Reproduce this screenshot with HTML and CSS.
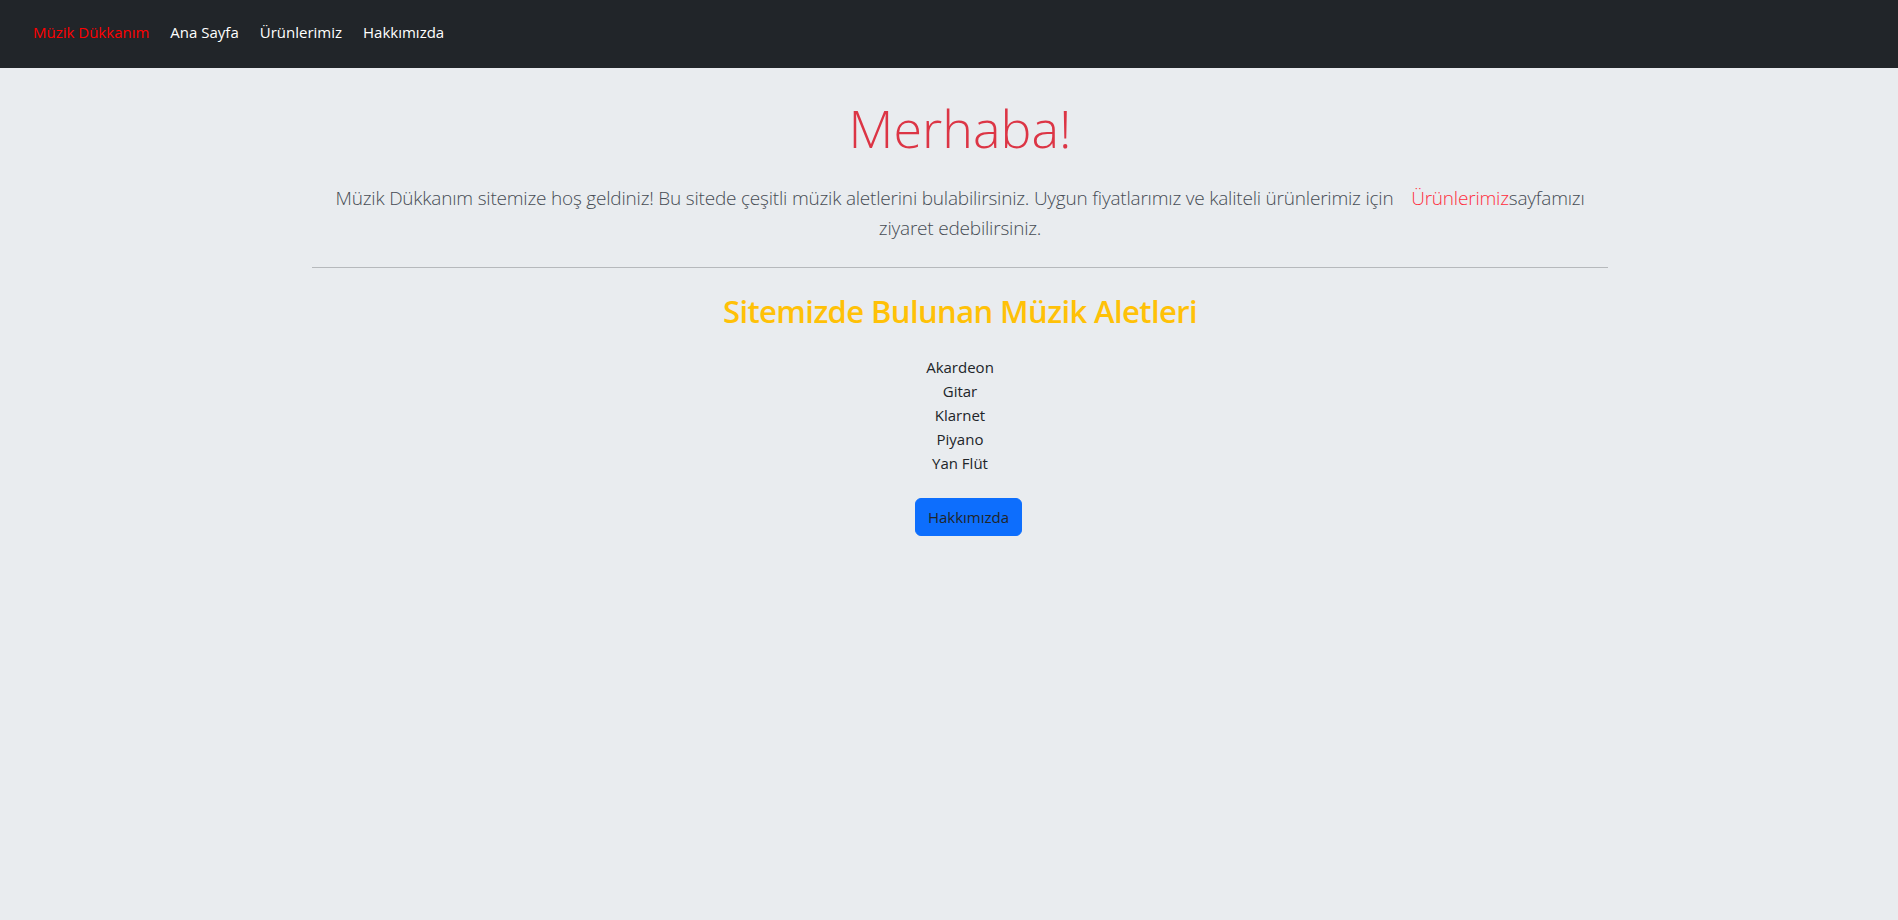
FILE: index.html
```html
<!DOCTYPE html>
<html lang="tr">
<head>
<meta charset="utf-8">
<title>Müzik Dükkanım</title>
<link rel="stylesheet" href="styles.css">
</head>
<body>
<nav class="navbar">
  <a class="brand" href="#">Müzik Dükkanım</a>
  <a class="nav-link" href="#">Ana Sayfa</a>
  <a class="nav-link" href="#">Ürünlerimiz</a>
  <a class="nav-link" href="#">Hakkımızda</a>
</nav>
<main class="page">
  <div class="container">
    <h1 class="display">Merhaba!</h1>
    <p class="lead">Müzik Dükkanım sitemize hoş geldiniz! Bu sitede çeşitli müzik aletlerini bulabilirsiniz. Uygun fiyatlarımız ve kaliteli ürünlerimiz için <a class="lead-link" href="#">Ürünlerimiz</a>sayfamızı ziyaret edebilirsiniz.</p>
    <hr class="divider">
    <h2 class="section-title">Sitemizde Bulunan Müzik Aletleri</h2>
    <ul class="instruments">
      <li>Akardeon</li>
      <li>Gitar</li>
      <li>Klarnet</li>
      <li>Piyano</li>
      <li>Yan Flüt</li>
    </ul>
    <button class="btn-primary" type="button">Hakkımızda</button>
  </div>
</main>
</body>
</html>
```

FILE: styles.css
```css
* { box-sizing: border-box; }
html, body {
  margin: 0;
  padding: 0;
}
body {
  background: #e9ecef;
  font-family: "Open Sans", "Noto Sans", sans-serif;
  font-size: 15px;
  line-height: 1.5;
  color: #212529;
  min-height: 920px;
}
a { text-decoration: none; }

.navbar {
  height: 68px;
  background: #212529;
  display: flex;
  align-items: center;
  gap: 21px;
  padding: 0 0 4px 33px;
}
.brand { color: #ff0000; font-size: 15px; }
.nav-link { color: #ffffff; font-size: 15px; }

.page {
  padding-left: 22px;
}
.container {
  max-width: 1296px;
  margin: 0 auto;
  text-align: center;
}
.display {
  margin: 29px 0 0;
  font-size: 52px;
  font-weight: 300;
  line-height: 1.2;
  color: #dc3545;
}
.lead {
  margin: 24px 0 0;
  padding: 0 12px;
  font-size: 19px;
  font-weight: 300;
  letter-spacing: -0.2px;
  line-height: 30px;
  color: #474d55;
}
.lead-link {
  color: #ff2d3d;
  margin-left: 13px;
}
.divider {
  margin: 24px 0 0;
  border: 0;
  border-top: 1px solid #b6b9bc;
}
.section-title {
  margin: 25px 0 0;
  font-size: 31px;
  font-weight: 600;
  letter-spacing: -0.6px;
  line-height: 1.2;
  color: #ffc107;
}
.instruments {
  list-style: none;
  margin: 24px 0 23px;
  padding: 0;
  line-height: 24px;
}
.btn-primary {
  font-family: inherit;
  font-size: 15px;
  line-height: 24px;
  padding: 6px 12px;
  margin-left: 17px;
  border: 1px solid #0d6efd;
  border-radius: 6px;
  background: #0d6efd;
  color: #212529;
  cursor: pointer;
}
```
